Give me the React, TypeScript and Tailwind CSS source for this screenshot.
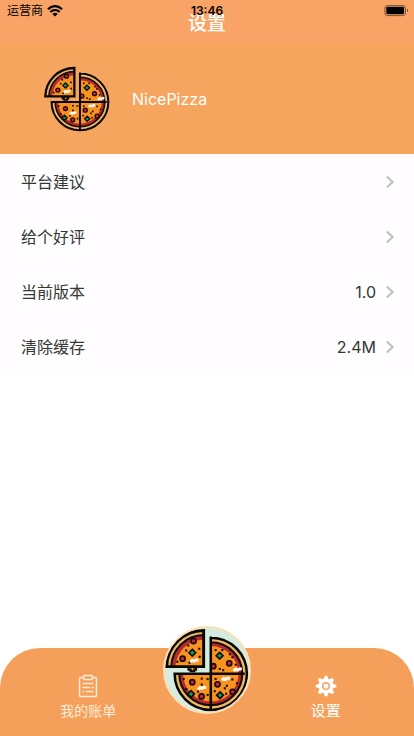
import React from "react";

const PEPPERONI = [
  [98, 62], [72, 104], [183, 115], [145, 122], [95, 160], [117, 194], [155, 165], [191, 183],
];
const BASIL = [[95, 90], [160, 97], [92, 188], [161, 191]];
const CHEESE = [[100, 110], [203, 131], [118, 175], [175, 153]];
const OLIVES = [
  [85, 72], [111, 80], [80, 84], [112, 99], [88, 113], [59, 111], [150, 83], [166, 83], [184, 93],
  [190, 100], [160, 128], [168, 131], [198, 118], [74, 152], [117, 151], [117, 165], [131, 152],
  [80, 176], [108, 182], [131, 190], [150, 152], [190, 153], [177, 168], [172, 174], [201, 162],
  [148, 181], [175, 187], [139, 206],
];

function Pizza({ className }: { className: string }) {
  return (
    <svg viewBox="30 31 200 200" className={className} aria-hidden="true">
      <path d="M123 125H33A90 90 0 0 1 123 36Z" fill="#f0b765" />
      <path d="M121 125H47A76 76 0 0 1 121 49Z" fill="#b9272f" />
      <path d="M121 125H55A66 66 0 0 1 121 59Z" fill="#f7931e" />
      <path d="M139 53A87 87 0 1 1 52 140H139Z" fill="#f0b765" />
      <path d="M139 65A75 75 0 1 1 64 140H139Z" fill="#b9272f" />
      <path d="M139 74A66 66 0 1 1 73 140H139Z" fill="#f7931e" />
      <path d="M45 123A77 77 0 0 1 121 48M139 65A75 75 0 1 1 64 140" fill="none" stroke="#100d0b" strokeWidth="5" />
      <path d="M86 124V130H91V134H100V130H104V124Z" fill="#f7931e" stroke="#0b0a08" strokeWidth="5" />
      {OLIVES.map(([x, y]) => (
        <rect key={`${x}-${y}`} x={x - 2} y={y - 2} width="5" height="5" fill="#17100a" />
      ))}
      {PEPPERONI.map(([x, y]) => (
        <circle key={`${x}-${y}`} cx={x} cy={y} r="6" fill="#e02038" stroke="#100d0b" strokeWidth="4" />
      ))}
      {BASIL.map(([x, y]) => (
        <path
          key={`${x}-${y}`}
          d="M0-8L8 0L0 8L-8 0Z"
          transform={`translate(${x} ${y})`}
          fill="#159b55"
          stroke="#100d0b"
          strokeWidth="4"
        />
      ))}
      <path d="M122 123H34A88 88 0 0 1 122 37Z" fill="none" stroke="#090807" strokeWidth="7" />
      <path d="M139 54A86 86 0 1 1 53 140H220M139 51V226" fill="none" stroke="#090807" strokeWidth="6" />
      {CHEESE.map(([x, y]) => (
        <path
          key={`${x}-${y}`}
          d="M-10 2L-5-2L0 0L5-3L10-2"
          transform={`translate(${x} ${y})`}
          fill="none"
          stroke="#fff8ef"
          strokeWidth="7"
        />
      ))}
    </svg>
  );
}

function StatusBar() {
  return (
    <div className="absolute inset-x-0 top-0 z-10 grid h-[22px] grid-cols-3 items-center text-xs text-black">
      <div className="flex items-center gap-1 pl-[7px]">
        <span>运营商</span>
        <svg viewBox="0 0 16 12" className="h-3 w-4" aria-hidden="true">
          <path d="M1 4.3C5-0 11-0 15 4.3M3.4 7C6 4.3 10 4.3 12.6 7" fill="none" stroke="#000" strokeWidth="2.2" />
          <path d="M5.4 8.9Q8 6.8 10.6 8.9L8 11.6Z" />
        </svg>
      </div>
      <time className="text-center font-semibold">13:46</time>
      <svg viewBox="0 0 25 12" className="mr-[5px] h-3 w-[25px] justify-self-end" aria-hidden="true">
        <rect x="0.9" y="0.4" width="20.6" height="10.2" rx="2.8" fill="none" stroke="#000" strokeOpacity="0.5" />
        <rect x="2.3" y="1.8" width="17.8" height="7.4" rx="1.4" />
        <path d="M23 3.8Q25.4 5.5 23 7.2Z" fillOpacity="0.55" />
      </svg>
    </div>
  );
}

const ROWS = [
  { label: "平台建议", value: "" },
  { label: "给个好评", value: "" },
  { label: "当前版本", value: "1.0" },
  { label: "清除缓存", value: "2.4M" },
];

export default function App() {
  return (
    <div className="relative flex min-h-screen flex-col bg-white font-['Inter','Noto_Sans_CJK_SC',sans-serif]">
      <StatusBar />
      <header className="flex h-11 items-center justify-center bg-[#f9a366] pt-1">
        <h1 className="text-[19px] font-medium text-white">设置</h1>
      </header>
      <section className="flex h-[110px] items-center gap-[22px] bg-[#f5a55d] pl-11 text-white">
        <Pizza className="size-[66px]" />
        <p className="text-base">NicePizza</p>
      </section>
      <main className="flex-1">
        <ul className="bg-[#fffdff] text-base text-[#333833]">
          {ROWS.map((row) => (
            <li key={row.label}>
              <button type="button" className="flex h-[55px] w-full items-center pr-5 pl-[21px] text-left">
                <span className="flex-1">{row.label}</span>
                <span>{row.value}</span>
                <svg viewBox="0 0 8 14" className="ml-[10px] h-[14px] w-2" aria-hidden="true">
                  <path d="M0.8 1.5L6.6 7L0.8 12.5" fill="none" stroke="#c2c1c5" strokeWidth="2.2" />
                </svg>
              </button>
            </li>
          ))}
        </ul>
      </main>
      <nav className="grid h-[88px] grid-cols-3 rounded-t-[40px] bg-[#f5a05a] px-[29px]">
        <button type="button" className="flex flex-col items-center gap-[3px] pt-[26px] text-sm text-[#fdecd9]">
          <svg viewBox="0 0 20 24" className="h-6 w-5" fill="none" stroke="currentColor" strokeWidth="1.5" aria-hidden="true">
            <path d="M5 3.5H2.5Q1.5 3.5 1.5 4.5V21.5Q1.5 22.5 2.5 22.5H17.5Q18.5 22.5 18.5 21.5V4.5Q18.5 3.5 17.5 3.5H15" />
            <rect x="5.5" y="1.5" width="9" height="4" rx="1" />
            <path d="M4.5 9.5H15.5M4.5 13.5H12M13.5 13.5H15.5M4.5 17.5H6.5M8 17.5H15.5" />
          </svg>
          <span>我的账单</span>
        </button>
        <button
          type="button"
          aria-label="NicePizza"
          className="-mt-[22px] size-[88px] justify-self-center overflow-hidden rounded-full border-2 border-[#fbe0b5] bg-[#d6ece1]"
        >
          <Pizza className="size-full" />
        </button>
        <button type="button" aria-current="page" className="flex flex-col items-center gap-[3px] pt-[26px] text-sm text-white">
          <svg viewBox="-12 -12 24 24" className="size-6" aria-hidden="true">
            {[0, 45, 90, 135, 180, 225, 270, 315].map((angle) => (
              <path
                key={angle}
                d="M-2.6-6L-1.6-9.3Q0-11.8 1.6-9.3L2.6-6Z"
                transform={`rotate(${angle})`}
                fill="#fff"
              />
            ))}
            <circle r="7.4" fill="#fff" />
            <circle r="3.3" fill="none" stroke="#f5a05a" strokeWidth="1.5" />
          </svg>
          <span className="text-[15px] leading-5">设置</span>
        </button>
      </nav>
    </div>
  );
}
